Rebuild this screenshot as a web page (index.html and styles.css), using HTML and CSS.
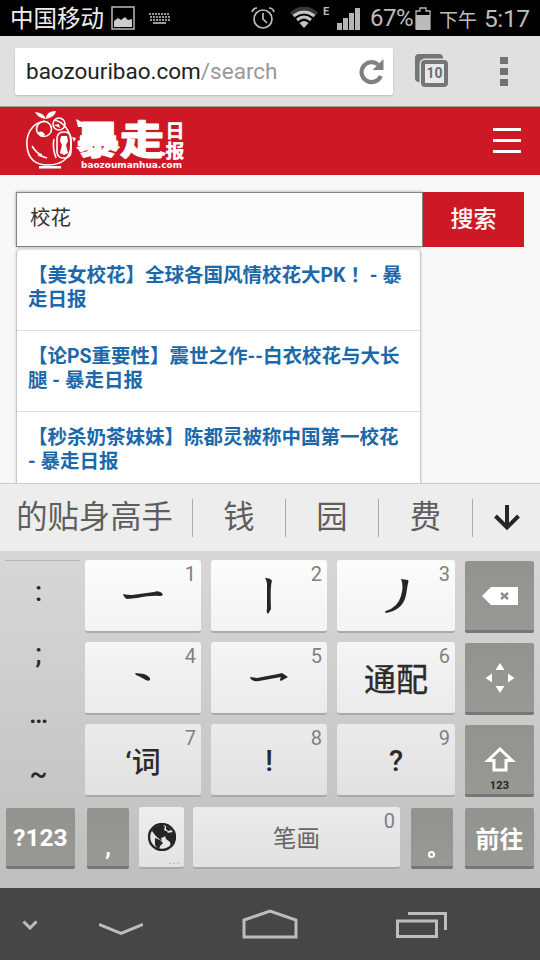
FILE: index.html
```html
<!DOCTYPE html>
<html lang="zh-CN">
<head>
<meta charset="utf-8">
<title>baozouribao.com/search</title>
<link rel="stylesheet" href="styles.css">
</head>
<body>
<div class="phone">
  <header class="status">
    <span class="carrier">中国移动</span>
    <svg class="pic" width="24" height="24" viewBox="0 0 24 24"><rect x="1" y="1" width="22" height="22" fill="none" stroke="#bbb" stroke-width="1.5"/><path d="M3 21v-6l4-3 3 2 4-3 3 3 4-1v8z" fill="#ccc"/></svg>
    <svg class="kbd" width="23" height="13" viewBox="0 0 23 13"><path d="M1 2h21M2 5h20M2 8h20" stroke="#999" stroke-width="2" stroke-dasharray="2 1"/><path d="M5 11h13" stroke="#999" stroke-width="2"/></svg>
    <span class="grow"></span>
    <svg class="alarm" width="26" height="24" viewBox="0 0 26 24" fill="none" stroke="#bdbdbd" stroke-width="1.7"><circle cx="13" cy="13" r="9"/><path d="M13 7v6l4 4M2 6q1-4 5-4M19 2q4 0 5 4"/></svg>
    <svg class="wifi" width="28" height="22" viewBox="0 0 28 22" fill="none"><path d="M1 7q13-11 26 0" stroke="#383838" stroke-width="4"/><path d="M3.500 9q10.500-8 21 0" stroke="#c4c4c4" stroke-width="3"/><path d="M7 13q7-6 14 0" stroke="#c4c4c4" stroke-width="3"/><path d="M9.500 16q4.500-4 9 0L14 21z" fill="#c4c4c4"/></svg>
    <span class="edge">E</span>
    <svg class="signal" width="24" height="23" viewBox="0 0 24 23" fill="#b5b5b5"><path d="M0 16h5v7H0zM6 11h5v12H6zM12 6h5v17h-5zM18 1h5v22h-5z"/></svg>
    <span class="percent">67%</span>
    <svg class="battery" width="16" height="23" viewBox="0 0 16 23"><path d="M1 22V4h4V1h6v3h4v18z" fill="none" stroke="#b5b5b5" stroke-width="1.300"/><path d="M1 8h14v15H1z" fill="#bbb"/></svg>
    <span class="ampm">下午</span>
    <span class="clock">5:17</span>
  </header>

  <div class="toolbar">
    <div class="address"><span class="url">baozouribao.com<span class="path">/search</span></span>
      <svg class="reload" width="26" height="27" viewBox="0 0 26 27"><path d="M22.800 18A10 10 0 1 1 20 6.500" fill="none" stroke="#808080" stroke-width="4.200"/><path d="M25.500 1v11H14.500z" fill="#808080"/></svg>
    </div>
    <div class="tabs"><span class="count">10</span></div>
    <div class="dots"><i></i><i></i><i></i></div>
  </div>

  <div class="site">
    <svg class="logo" width="170" height="66" viewBox="0 0 170 66">
      <g fill="none" stroke="#fff" stroke-width="1.600">
        <path d="M21 13C7 15 2 27 3 38C4 50 11 57 24 57C38 57 47 50 47 36C47 23 40 14 30 12"/>
        <circle cx="20" cy="21" r="7.500"/><circle cx="35" cy="16" r="6"/>
        <rect x="33" y="24" width="14" height="26" rx="6"/>
        <path d="M30 31q-2 8 2 19M8 38q5 8 10 9M14 47l9 3"/>
      </g>
      <path d="M22 11q-2-6-11-7 3 6 11 7zm0 0q0-8 10-8-1 6-10 8zM14 24q5-2 7 3l-4 2zM30 17l5-1 1 4zM15 58h22v2.500H15zM37 28h6l1 5-2 4 2 8-4 2-4-2 2-8-2-4z" fill="#fff"/>
      <text class="brand" x="52" y="46" textLength="88" lengthAdjust="spacingAndGlyphs">暴走</text>
      <path d="M52 11l8 4v4h-6zM48 29l4 1-2 4zM136 43l6 2-2 3-5-1z" fill="#fff"/>
      <text class="daily" x="141.500" y="30">日</text>
      <text class="daily" x="141.500" y="50">报</text>
      <text class="domain" x="57" y="60" textLength="101" lengthAdjust="spacingAndGlyphs">baozoumanhua.com</text>
    </svg>
    <div class="menu"><i></i><i></i><i></i></div>
  </div>

  <main class="page">
    <div class="search"><div class="field">校花</div><div class="submit">搜索</div></div>
    <ul class="results">
      <li>【美女校花】全球各国风情校花大PK<span class="bang" lang="zh-TW">！</span> - 暴<br>走日报</li>
      <li>【论PS重要性】震世之作--白衣校花与大长<br>腿 - 暴走日报</li>
      <li>【秒杀奶茶妹妹】陈都灵被称中国第一校花<br>- 暴走日报</li>
    </ul>
  </main>

  <div class="candidates">
    <span>的贴身高手</span><span>钱</span><span>园</span><span>费</span>
    <span><svg width="28" height="28" viewBox="0 0 28 28" fill="none" stroke="#262626" stroke-width="4"><path d="M14 1v23M2.500 12L14 23.500 25.500 12"/></svg></span>
  </div>

  <div class="keyboard">
    <div class="pad">
      <div class="symbols"><span>:</span><span>;</span><span>…</span><span>~</span></div>
      <div class="key"><b>1</b><svg width="42" height="12" viewBox="0 0 42 12"><path d="M1 4Q4 5 10 5L32 2Q36 0 40 3 42 6 38 6Q30 5 15 8L5 9Q2 8 1 4z"/></svg></div>
      <div class="key"><b>2</b><svg width="12" height="40" viewBox="0 0 12 40"><path d="M2 2Q8 2 9 5Q7 10 8 33L5 38Q3 36 4 32L4 8Q4 5 2 2z"/></svg></div>
      <div class="key"><b>3</b><svg class="fall" width="26" height="36" viewBox="0 0 26 36"><path d="M17 1l7 1q1 1 0 3l-2 12Q19 32 2 35q-2-1 0-2Q14 29 17 18 20 8 17 1z"/></svg></div>
      <div class="key dark"><svg width="36" height="18" viewBox="0 0 36 18"><path d="M0 9L9 0h27v18H9z" fill="#fff"/><path d="M19 6l7 6M26 6l-7 6" stroke="#8e8e8a" stroke-width="2.500"/></svg></div>

      <div class="key mid"><b>4</b><svg width="16" height="9" viewBox="0 0 16 9"><path d="M0 0L9 1Q16 4 15 7 13 9 9 6Q4 3 1 2z"/></svg></div>
      <div class="key mid"><b>5</b><svg width="40" height="12" viewBox="0 0 40 12"><path d="M1 5L8 6 29 2 33 1 39 5 32 9Q30 8 32 5L10 9Q2 10 1 5z"/></svg></div>
      <div class="key mid"><b>6</b><span class="big">通配</span></div>
      <div class="key dark"><svg width="30" height="32" viewBox="0 0 30 32" fill="#fff"><path d="M15 1l4.500 7h-9zM15 31l4.500-7h-9zM.5 16L7 11.500v9zM29.500 16L23 11.500v9z"/></svg></div>

      <div class="key low"><b>7</b><span class="word">‘词</span></div>
      <div class="key low"><b>8</b><span class="mark">!</span></div>
      <div class="key low"><b>9</b><span class="mark">?</span></div>
      <div class="key dark shift"><svg width="32" height="26" viewBox="0 0 32 26" fill="none" stroke="#fff" stroke-width="3"><path d="M16 3L4 14.500h6V24h12v-9.500h6z"/></svg><small>123</small></div>
    </div>
    <div class="bottom">
      <div class="key dark mode">?123</div>
      <div class="key dark comma">,</div>
      <div class="key globe"><svg width="28" height="28" viewBox="0 0 28 28"><circle cx="14" cy="14" r="13" fill="#e5e5e5" stroke="#252525" stroke-width="2.400"/><path d="M5 5L14 1l3 3-1 3 4 2-4 5-3 1 1 3-4-3-3-3-3-4zM7 15l5 2 3 3-3 3-1 4-4-5zM18 2l6 5-4 1-2-2zM19 10l6-1 2 3v7l-4 5-1-5-4-3-1-3z"/></svg><em>...</em></div>
      <div class="key low space"><b>0</b>笔画</div>
      <div class="key dark stop"><span class="ring"></span><em>...</em></div>
      <div class="key dark go">前往</div>
    </div>
  </div>

  <nav class="nav">
    <svg width="16" height="10" viewBox="0 0 16 10"><path d="M1.500 1.500L8 8l6.500-6.500"/></svg>
    <svg class="back" width="44" height="14" viewBox="0 0 44 14"><path d="M0 2.500l22 9 22-9"/></svg>
    <svg class="home" width="56" height="30" viewBox="0 0 56 30"><path d="M2 28V11L28 2l26 9v17z"/></svg>
    <svg class="recent" width="52" height="28" viewBox="0 0 52 28"><path d="M1.500 10h39v15.500h-39zM12 2.500h37.500V19"/></svg>
  </nav>
</div>
</body>
</html>
```
FILE: styles.css
```css
* { box-sizing: border-box; }
body { margin: 0; font-family: Roboto, "Noto Sans CJK SC", sans-serif; text-spacing-trim: space-all; }
svg { display: block; flex: none; }
.phone { width: 540px; height: 960px; overflow: hidden; display: flex; flex-direction: column; background: #f8f8f8; }
.phone > * { flex: none; }

.status { height: 36px; background: #000; display: flex; align-items: center; padding: 0 9px 0 10px; color: #bdbdbd; white-space: nowrap; }
.carrier { font-size: 23.5px; color: #eee; width: 101px; line-height: 34px; padding-top: 1px; }
.kbd { margin-left: 13px; }
.grow { flex: 1; }
.alarm { margin-right: -2px; }
.wifi { margin-left: 16px; }
.edge { font-size: 11px; font-weight: 700; margin: 0 8px 13px 5px; width: 6px; }
.signal { margin-right: 9px; }
.percent { font-size: 24px; width: 45px; letter-spacing: -.5px; }
.ampm { font-size: 19px; margin-left: 8px; width: 38px; }
.clock { font-size: 24.5px; margin-left: 7px; width: 47px; letter-spacing: -.4px; }

.toolbar { height: 71px; background: #e0e0e0; border-bottom: 1px solid #a49f99; display: flex; align-items: center; padding-left: 15px; }
.address { width: 378px; height: 47px; background: #fff; border-radius: 2px; box-shadow: 0 1px 2px #bbb; display: flex; align-items: center; justify-content: space-between; padding: 0 9px 0 11px; }
.url { font-size: 22.5px; color: #222; white-space: nowrap; }
.path { color: #999; }
.tabs { position: relative; width: 33px; height: 34px; margin-left: 22px; padding: 6px 0 0 6px; }
.tabs::before { content: ""; position: absolute; left: 0; top: 0; width: 28px; height: 28px; background: #757575; border-radius: 4px; }
.count { position: relative; display: block; width: 27px; height: 27px; border: 4px solid #757575; border-radius: 4px; background: #e8e8e8; box-shadow: 0 0 0 1.5px #e0e0e0; color: #6d6d6d; font-size: 14px; font-weight: 700; line-height: 19px; text-align: center; }
.dots { margin-left: 52px; display: grid; gap: 4px; }
.dots i { width: 8px; height: 7px; background: #727272; }

.site { height: 68px; background: #cd1825; display: flex; justify-content: space-between; padding: 1px 19px 0 24px; }
.brand { font-size: 39px; font-weight: 900; fill: #fff; stroke: #fff; stroke-width: 1.2; stroke-linejoin: round; }
.daily { font-size: 19px; font-weight: 900; fill: #fff; }
.domain { font: 700 9px "DejaVu Sans", sans-serif; fill: #fff; }
.menu { display: grid; gap: 8px; align-content: start; padding-top: 20px; }
.menu i { width: 28px; height: 3px; background: #fff; }

.page { height: 308px; overflow: hidden; padding: 17px 16px 0; }
.search { display: flex; height: 55px; }
.field { width: 407px; background: #fbfbfb; border: 1.5px solid #858585; box-shadow: 0 0 3px #999; font-size: 20.5px; line-height: 51px; padding-left: 13px; color: #333; }
.submit { width: 101px; background: #cd1825; color: #fff; font-size: 23px; font-weight: 500; line-height: 55px; text-align: center; }
.results { list-style: none; margin: 2px 0 0; padding: 0; width: 405px; height: 250px; background: #fff; border: 1px solid #c8c8c8; border-top-color: #e8e8e8; border-radius: 5px 5px 0 0; box-shadow: 0 0 3px #ccc; }
.results li { height: 81px; padding: 14px 0 0 11px; border-bottom: 1px solid #ddd; font-size: 19.5px; font-weight: 700; line-height: 24px; color: #1b69ab; white-space: nowrap; }
.bang { font-family: "Noto Sans CJK TC", sans-serif; line-height: 1; }

.candidates { height: 68px; background: #ededed; border-top: 1px solid #ccc; display: grid; grid-template-columns: 193px 93px 93px 94px 67px; align-items: center; color: #5e5e5e; font-size: 31.3px; }
.candidates span { height: 38px; line-height: 37px; display: flex; justify-content: center; align-items: center; border-right: 1px solid #aaa; white-space: nowrap; }
.candidates span:first-child { padding-right: 3px; }
.candidates span:last-child { border: 0; }

.keyboard { height: 337px; background: linear-gradient(#d7d7d7, #bfbfbf); padding: 9px 6px 0 5px; }
.pad { display: grid; grid-template-columns: 80px 126px 126px 128px 69px; grid-template-rows: repeat(3, 73px); row-gap: 9px; }
.pad .key { margin-right: 10px; }
.pad .key.dark { margin: 1px 0 0; }
.symbols { grid-row: 1 / 4; border-top: 1px solid #b5b5b5; display: grid; grid-template-rows: 62px 60px 60px 50px; align-content: start; font-size: 27px; font-weight: 500; color: #292929; text-align: center; margin-right: 5px; padding-right: 8px; line-height: 62px; }
.key { position: relative; background: linear-gradient(#fcfcfc, #f3f3f3); border-radius: 3px; border-bottom: 2px solid #aaa; display: flex; align-items: center; justify-content: center; color: #2b2b2b; fill: #252525; white-space: nowrap; }
.key.mid { background: linear-gradient(#f5f5f5, #ebebeb); }
.key.low { background: linear-gradient(#ebebeb, #e1e1e1); }
.key.dark { background: linear-gradient(#92928f, #989895); border-bottom: 3px solid #777; border-radius: 2px; color: #fff; }
.key b { position: absolute; right: 5px; top: 2px; font-size: 20px; line-height: 24px; font-weight: 400; color: #808080; }
.fall { margin-left: 2px; }
.big { font-size: 32px; padding-bottom: 2px; -webkit-text-stroke: .4px; }
.word { font-size: 29px; font-weight: 500; }
.mark { font-size: 29px; font-weight: 500; padding-top: 3px; }
.shift svg { margin-top: -1px; }
.shift small { position: absolute; bottom: 1px; font-size: 11px; line-height: 14px; font-weight: 700; letter-spacing: .2px; color: #252525; }
.bottom { display: grid; grid-template-columns: 81px 52px 54px 218px 54px 69px; height: 62px; margin-top: 10px; padding-left: 1px; }
.mode { font-size: 24.5px; font-weight: 700; margin: 1px 12px 0 0; }
.comma { font-size: 25px; font-weight: 500; padding-top: 19px; margin: 1px 10px 0 0; }
.globe { background: linear-gradient(#eee, #e2e2e2); margin-right: 9px; }
.key em { position: absolute; right: 3px; bottom: 1px; font-size: 12px; line-height: 12px; font-style: normal; color: #b0b0b0; letter-spacing: 1px; }
.space { font-size: 23.5px; color: #666; margin-right: 11px; }
.stop { margin: 1px 12px 0 0; }
.ring { width: 7px; height: 7px; border: 2px solid #fff; border-radius: 50%; margin: 34px 2px 0 0; }
.go { font-size: 24px; font-weight: 700; margin-top: 1px; }

.nav { height: 72px; background: #464646; display: flex; align-items: flex-start; padding: 32px 0 0 22px; fill: none; stroke: #bdbdbd; stroke-width: 3; }
.back { margin-left: 61px; margin-top: 2px; }
.home { margin-left: 99px; margin-top: -11px; }
.recent { margin-left: 98px; margin-top: -9px; }
```
